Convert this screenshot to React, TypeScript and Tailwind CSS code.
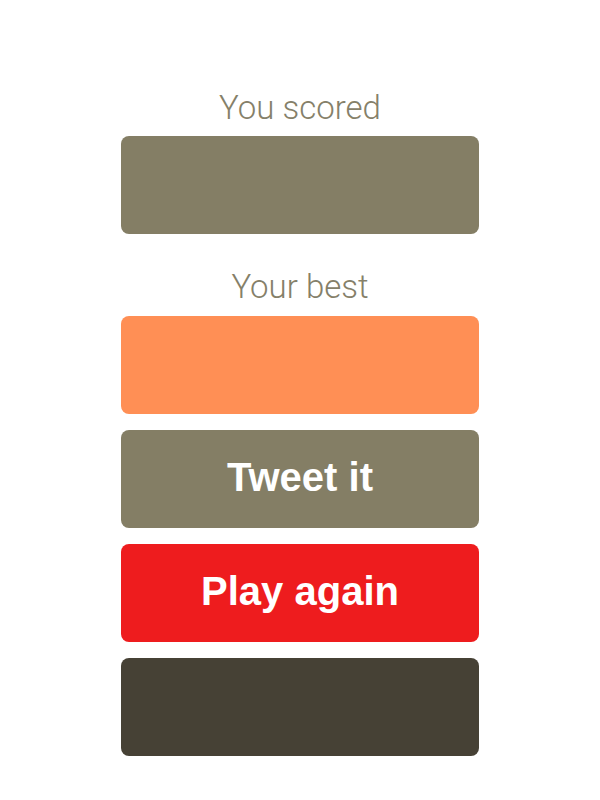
const Label = ({ children, className = '' }: { children: string; className?: string }) => (
    <div
        className={`h-[40px] text-center text-[33px] leading-[40px] font-light text-[#858069] ${className}`}
        style={{ fontFamily: 'Roboto, "Liberation Sans", sans-serif' }}
    >
        {children}
    </div>
);

const Box = ({ color, children }: { color: string; children?: string }) => (
    <div
        className={`h-[98px] w-[358px] rounded-[8px] flex items-center justify-center pb-[4px] text-white font-bold text-[40px] leading-[40px] ${color}`}
        style={{ fontFamily: '"Liberation Sans", Arial, sans-serif' }}
    >
        {children}
    </div>
);

const App = (): JSX.Element => {
    return (
        <div className="w-[600px] h-[800px] bg-white pt-[88px] flex flex-col items-center">
            <Label className="mb-[8px]">You scored</Label>
            <Box color="bg-[#847e65]" />
            <Label className="mt-[33px] mb-[9px]">Your best</Label>
            <Box color="bg-[#ff8f55]" />
            <div className="mt-[16px] flex flex-col gap-[16px]">
                <Box color="bg-[#847e65]">Tweet it</Box>
                <Box color="bg-[#ee1c1e]">Play again</Box>
                <Box color="bg-[#464135]" />
            </div>
        </div>
    );
};

export default App;
